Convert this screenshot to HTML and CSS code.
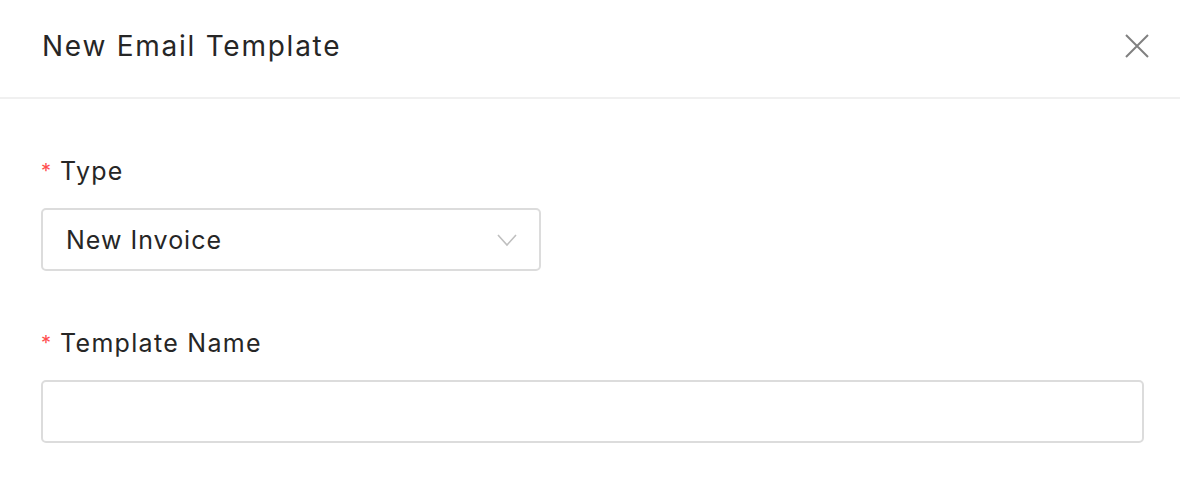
FILE: index.html
```html
<!DOCTYPE html>
<html lang="en">
<head>
  <meta charset="UTF-8">
  <meta name="viewport" content="width=device-width, initial-scale=1.0">
  <title>New Email Template</title>
  <link rel="stylesheet" href="styles.css">
</head>
<body>
  <div class="modal">
    <div class="modal-header">
      <div class="modal-title">New Email Template</div>
      <button class="modal-close" aria-label="Close">
        <svg width="24" height="24" viewBox="0 0 24 24">
          <path d="M1 1 L23 23 M23 1 L1 23" stroke="#808080" stroke-width="2" fill="none"/>
        </svg>
      </button>
    </div>

    <div class="modal-body">
      <div class="form-item">
        <label class="form-label"><span class="required">*</span>Type</label>
        <div class="select">
          <span class="select-value">New Invoice</span>
          <svg class="select-arrow" width="20" height="14" viewBox="0 0 20 14">
            <path d="M1 2 L10 12 L19 2" stroke="#bfbfbf" stroke-width="1.6" fill="none"/>
          </svg>
        </div>
      </div>

      <div class="form-item">
        <label class="form-label" for="templateName"><span class="required">*</span>Template Name</label>
        <input class="input" type="text" id="templateName">
      </div>
    </div>
  </div>
</body>
</html>
```

FILE: styles.css
```css
body {
  margin: 0;
  font-family: Inter, 'Liberation Sans', Arial, sans-serif;
  color: #262626;
  background-color: white;
}
.modal-header {
  height: 97px;
  display: flex;
  align-items: center;
  justify-content: space-between;
  padding: 0 31px 0 42px;
  border-bottom: 2px solid #f0f0f0;
}
.modal-title {
  font-size: 28px;
  line-height: 36px;
  letter-spacing: 1.75px;
  margin-top: -6px;
}
.modal-close {
  background: none;
  border: none;
  padding: 0;
  margin-top: -6px;
  cursor: pointer;
  display: flex;
}
.modal-body {
  padding: 53px 36px 0 41px;
}
.form-item {
  margin-bottom: 53px;
}
.form-label {
  display: block;
  font-size: 25px;
  line-height: 38px;
  letter-spacing: 1.3px;
  margin-bottom: 18px;
}
.required {
  color: #ff4d4f;
  font-size: 20px;
  letter-spacing: 0;
  margin-right: 9px;
  vertical-align: 2px;
}
.select, .input {
  box-sizing: border-box;
  height: 63px;
  border: 2px solid #dcdcdc;
  border-radius: 5px;
  background-color: white;
}
.select {
  width: 500px;
  display: flex;
  align-items: center;
  justify-content: space-between;
  padding: 0 22px 0 23px;
}
.select-value {
  font-size: 25px;
  letter-spacing: 1px;
}
.input {
  display: block;
  width: 100%;
  font-family: inherit;
  font-size: 25px;
  padding: 0 23px;
  outline: none;
}
```
